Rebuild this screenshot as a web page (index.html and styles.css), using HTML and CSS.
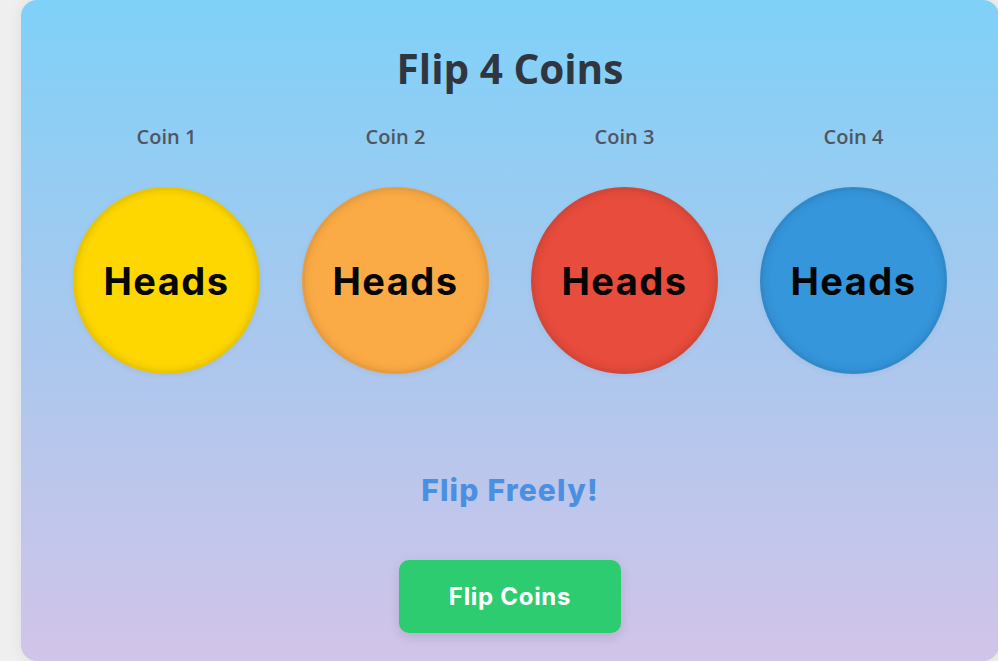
FILE: index.html
```html
<!DOCTYPE html>
<html lang="en">
<head>
<meta charset="utf-8">
<title>Flip 4 Coins</title>
<link rel="stylesheet" href="styles.css">
</head>
<body>
  <main class="card">
    <h1 class="title">Flip 4 Coins</h1>
    <div class="coins">
      <div class="coin-slot">
        <div class="coin-label">Coin 1</div>
        <div class="coin coin-gold">Heads</div>
      </div>
      <div class="coin-slot">
        <div class="coin-label">Coin 2</div>
        <div class="coin coin-orange">Heads</div>
      </div>
      <div class="coin-slot">
        <div class="coin-label">Coin 3</div>
        <div class="coin coin-red">Heads</div>
      </div>
      <div class="coin-slot">
        <div class="coin-label">Coin 4</div>
        <div class="coin coin-blue">Heads</div>
      </div>
    </div>
    <p class="status">Flip Freely!</p>
    <button class="flip-btn" type="button">Flip Coins</button>
  </main>
</body>
</html>
```

FILE: styles.css
```css
html, body {
  margin: 0;
  padding: 0;
  height: 100%;
  overflow: hidden;
}

body {
  background: #efefef;
  font-family: "Open Sans", "Noto Sans", sans-serif;
}

.card {
  box-sizing: border-box;
  margin-left: 21px;
  width: 978px;
  height: 661px;
  border-radius: 16px;
  background: linear-gradient(180deg, #7fd1f8 0%, #a9c8ee 50%, #d2c4e9 100%);
  box-shadow: 0 0 14px rgba(0, 0, 0, 0.08);
  padding-top: 44px;
  display: flex;
  flex-direction: column;
  align-items: center;
}

.title {
  margin: 0;
  font-size: 40.5px;
  line-height: 50px;
  font-weight: 700;
  color: #2f3640;
}

.coins {
  display: flex;
  gap: 42px;
  margin-top: 30px;
}

.coin-slot {
  width: 187px;
  display: flex;
  flex-direction: column;
  align-items: center;
}

.coin-label {
  font-size: 20px;
  line-height: 26px;
  font-weight: 600;
  color: #4f5660;
}

.coin {
  box-sizing: border-box;
  margin-top: 37px;
  width: 187px;
  height: 187px;
  border-radius: 50%;
  border: 3px solid rgba(0, 0, 0, 0.08);
  display: flex;
  align-items: center;
  justify-content: center;
  font-family: "Inter", "Lato", sans-serif;
  font-size: 38px;
  letter-spacing: 1.5px;
  font-weight: 700;
  color: #050505;
  box-shadow: inset 0 0 10px rgba(0, 0, 0, 0.1), 0 2px 6px rgba(0, 0, 0, 0.05);
}

.coin-gold { background: #ffd700; }
.coin-orange { background: #fbab45; }
.coin-red { background: #e74c3c; }
.coin-blue { background: #3596dc; }

.status {
  margin: 96px 0 0;
  font-family: "Inter", "Lato", sans-serif;
  font-size: 30px;
  letter-spacing: 1.2px;
  line-height: 40px;
  font-weight: 800;
  color: #4a90e2;
}

.flip-btn {
  margin-top: 50px;
  width: 222px;
  height: 73px;
  border: none;
  border-radius: 10px;
  background: #2ecc71;
  color: #ffffff;
  font-family: "Inter", "Lato", sans-serif;
  font-size: 24px;
  letter-spacing: 0.7px;
  font-weight: 700;
  box-shadow: 0 4px 12px rgba(0, 0, 0, 0.12);
  cursor: pointer;
}
```
